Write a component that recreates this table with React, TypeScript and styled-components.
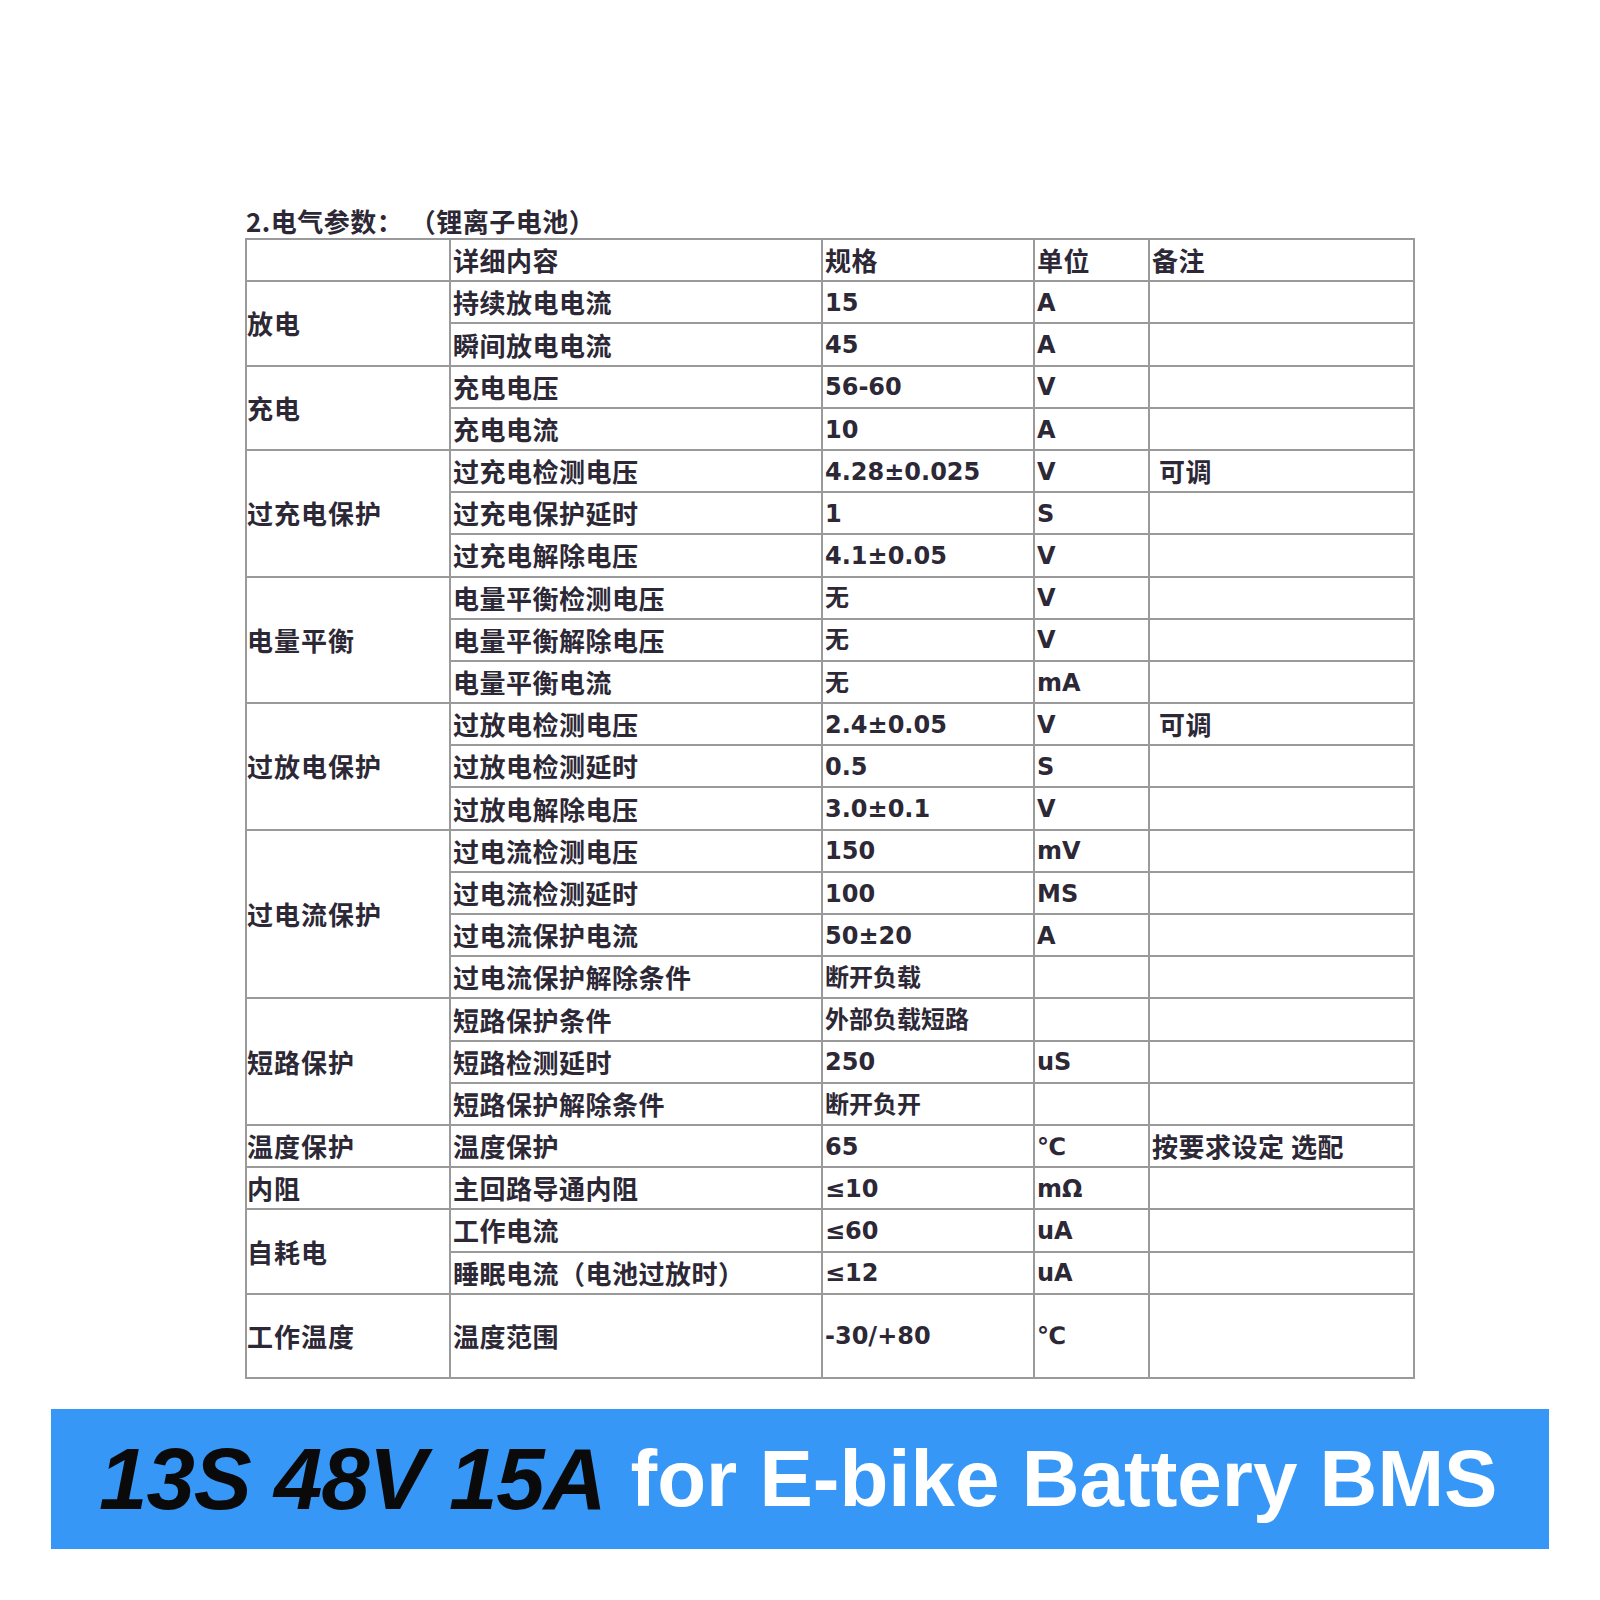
import React from 'react';
import styled, { createGlobalStyle } from 'styled-components';

type Row = {
  group?: string;
  span?: number;
  item: string;
  spec: string;
  unit: string;
  note?: string;
  tall?: boolean;
};

const rows: Row[] = [
  { group: '放电', span: 2, item: '持续放电电流', spec: '15', unit: 'A' },
  { item: '瞬间放电电流', spec: '45', unit: 'A' },
  { group: '充电', span: 2, item: '充电电压', spec: '56-60', unit: 'V' },
  { item: '充电电流', spec: '10', unit: 'A' },
  { group: '过充电保护', span: 3, item: '过充电检测电压', spec: '4.28±0.025', unit: 'V', note: '可调' },
  { item: '过充电保护延时', spec: '1', unit: 'S' },
  { item: '过充电解除电压', spec: '4.1±0.05', unit: 'V' },
  { group: '电量平衡', span: 3, item: '电量平衡检测电压', spec: '无', unit: 'V' },
  { item: '电量平衡解除电压', spec: '无', unit: 'V' },
  { item: '电量平衡电流', spec: '无', unit: 'mA' },
  { group: '过放电保护', span: 3, item: '过放电检测电压', spec: '2.4±0.05', unit: 'V', note: '可调' },
  { item: '过放电检测延时', spec: '0.5', unit: 'S' },
  { item: '过放电解除电压', spec: '3.0±0.1', unit: 'V' },
  { group: '过电流保护', span: 4, item: '过电流检测电压', spec: '150', unit: 'mV' },
  { item: '过电流检测延时', spec: '100', unit: 'MS' },
  { item: '过电流保护电流', spec: '50±20', unit: 'A' },
  { item: '过电流保护解除条件', spec: '断开负载', unit: '' },
  { group: '短路保护', span: 3, item: '短路保护条件', spec: '外部负载短路', unit: '' },
  { item: '短路检测延时', spec: '250', unit: 'uS' },
  { item: '短路保护解除条件', spec: '断开负开', unit: '' },
  { group: '温度保护', span: 1, item: '温度保护', spec: '65', unit: '℃', note: '按要求设定 选配' },
  { group: '内阻', span: 1, item: '主回路导通内阻', spec: '≤10', unit: 'mΩ' },
  { group: '自耗电', span: 2, item: '工作电流', spec: '≤60', unit: 'uA' },
  { item: '睡眠电流（电池过放时）', spec: '≤12', unit: 'uA' },
  { group: '工作温度', span: 1, item: '温度范围', spec: '-30/+80', unit: '℃', tall: true },
];

const GlobalStyle = createGlobalStyle`
  html, body {
    margin: 0;
    padding: 0;
    background: #ffffff;
  }
  body {
    width: 1600px;
    min-height: 1600px;
  }
`;

const Page = styled.div`
  width: 1600px;
  height: 1600px;
  padding-top: 204px;
  box-sizing: border-box;
  display: flex;
  flex-direction: column;
`;

const Sheet = styled.div`
  margin-left: 245px;
  width: 1168px;
  display: flex;
  flex-direction: column;
`;

const Title = styled.div`
  font-family: 'Noto Sans CJK SC', sans-serif;
  font-size: 26px;
  font-weight: 700;
  line-height: 34px;
  color: #2d2836;
  padding-left: 1px;
  letter-spacing: 0.5px;
  text-spacing-trim: space-all;
`;

const Table = styled.table`
  width: 1168px;
  border-collapse: collapse;
  table-layout: fixed;
  border: 2px solid #4a4a4a;
  color: #2d2836;
`;

const TRow = styled.tr<{ $tall?: boolean }>`
  height: ${p => (p.$tall ? '84px' : '42.2px')};
`;

const Cell = styled.td<{ $num?: boolean; $indent?: boolean }>`
  border: 2px solid #9a9a9a;
  padding: ${p => (p.$num ? '3px' : '0')} 0 0 ${p => (p.$indent ? '9px' : '2px')};
  vertical-align: middle;
  white-space: nowrap;
  overflow: hidden;
  font-family: ${p =>
    p.$num
      ? "'DejaVu Sans', 'Noto Sans CJK SC', sans-serif"
      : "'Noto Sans CJK SC', sans-serif"};
  font-size: ${p => (p.$num ? '24px' : '26px')};
  font-weight: ${p => (p.$num ? 700 : 600)};
  line-height: 1.15;
  letter-spacing: ${p => (p.$num ? '0' : '0.5px')};
  text-spacing-trim: space-all;
`;

const GroupCell = styled(Cell)`
  padding-left: 0;
  letter-spacing: 1px;
`;

const Banner = styled.div`
  margin-top: 30px;
  margin-left: 51px;
  width: 1498px;
  height: 140px;
  background: #3797f7;
  display: flex;
  align-items: center;
  padding-left: 48px;
  box-sizing: border-box;
  font-family: 'Liberation Sans', Arial, sans-serif;
  font-weight: 700;
  white-space: nowrap;
`;

const Model = styled.span`
  font-size: 87px;
  font-style: italic;
  color: #0a0a0a;
  letter-spacing: -1px;
  margin-right: 25px;
`;

const Label = styled.span`
  font-size: 80px;
  color: #ffffff;
`;

const App: React.FC = () => {
  return (
    <>
      <GlobalStyle />
      <Page>
        <Sheet>
          <Title>2.电气参数： （锂离子电池）</Title>
          <Table>
            <colgroup>
              <col style={{ width: 204 }} />
              <col style={{ width: 372 }} />
              <col style={{ width: 212 }} />
              <col style={{ width: 115 }} />
              <col style={{ width: 265 }} />
            </colgroup>
            <tbody>
              <TRow>
                <GroupCell />
                <Cell>详细内容</Cell>
                <Cell>规格</Cell>
                <Cell>单位</Cell>
                <Cell>备注</Cell>
              </TRow>
              {rows.map((row, i) => (
                <TRow key={i} $tall={row.tall}>
                  {row.group && <GroupCell rowSpan={row.span}>{row.group}</GroupCell>}
                  <Cell>{row.item}</Cell>
                  <Cell $num>{row.spec}</Cell>
                  <Cell $num>{row.unit}</Cell>
                  <Cell $indent={row.note === '可调'}>{row.note}</Cell>
                </TRow>
              ))}
            </tbody>
          </Table>
        </Sheet>
        <Banner>
          <Model>13S 48V 15A</Model>
          <Label>for E-bike Battery BMS</Label>
        </Banner>
      </Page>
    </>
  );
};

export default App;
